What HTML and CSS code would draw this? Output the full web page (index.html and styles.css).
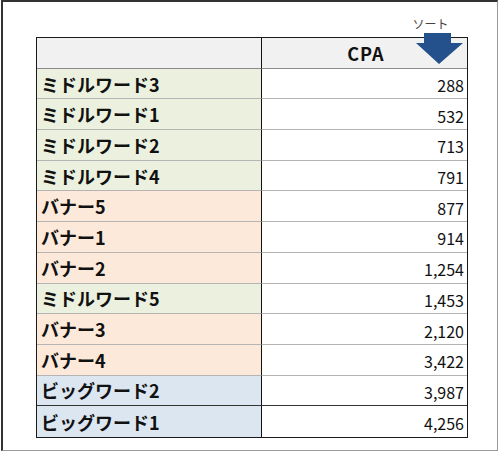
FILE: index.html
```html
<!DOCTYPE html>
<html lang="ja">
<head>
<meta charset="utf-8">
<link rel="stylesheet" href="styles.css">
</head>
<body>
<div class="frame">
  <div class="sheet">
    <div class="cell name head"></div>
    <div class="cell val head">CPA</div>
    <div class="cell name green">ミドルワード3</div><div class="cell val">288</div>
    <div class="cell name green">ミドルワード1</div><div class="cell val">532</div>
    <div class="cell name green">ミドルワード2</div><div class="cell val">713</div>
    <div class="cell name green">ミドルワード4</div><div class="cell val">791</div>
    <div class="cell name orange">バナー5</div><div class="cell val">877</div>
    <div class="cell name orange">バナー1</div><div class="cell val">914</div>
    <div class="cell name orange">バナー2</div><div class="cell val">1,254</div>
    <div class="cell name green">ミドルワード5</div><div class="cell val">1,453</div>
    <div class="cell name orange">バナー3</div><div class="cell val">2,120</div>
    <div class="cell name orange">バナー4</div><div class="cell val">3,422</div>
    <div class="cell name blue dark">ビッグワード2</div><div class="cell val dark">3,987</div>
    <div class="cell name blue last">ビッグワード1</div><div class="cell val last">4,256</div>
  </div>
  <div class="sort">
    <span class="sort-label">ソート</span>
    <svg class="sort-arrow" width="48" height="32" viewBox="0 0 48 32">
      <polygon points="8,0 35,0 35,10 47,10 23,31 0,10 8,10" fill="#24508c"/>
    </svg>
  </div>
</div>
</body>
</html>
```
FILE: styles.css
```css
html, body {
  margin: 0;
  padding: 0;
  background: #fff;
}
body {
  font-family: "Noto Sans CJK JP", "Noto Sans", sans-serif;
  color: #111;
}
.frame {
  position: relative;
  margin-left: 1px;
  width: 497px;
  height: 451px;
  box-sizing: border-box;
  border-top: 2px solid #333;
  border-left: 2px solid #333;
  border-right: 1px solid #9a9a9a;
  border-bottom: 1px solid #9a9a9a;
  padding: 35px 0 0 33px;
}
.sheet {
  width: 432px;
  height: 401px;
  box-sizing: border-box;
  border: 1.5px solid #1a1a1a;
  display: grid;
  grid-template-columns: 225px 1fr;
  grid-template-rows: repeat(13, 1fr);
}
.cell {
  display: flex;
  align-items: center;
  border-bottom: 1px solid #b4b4b4;
  box-sizing: border-box;
  min-height: 0;
}
.name {
  border-right: 1px solid #111;
  padding-left: 4px;
  font-weight: 700;
  font-size: 18px;
}
.val {
  justify-content: flex-end;
  padding-right: 3px;
  padding-top: 3px;
  font-size: 16px;
  background: #fff;
}
.head {
  background: #f1f1f1;
  border-bottom-color: #8a8a8a;
}
.val.head {
  justify-content: center;
  padding: 0 0 0 3px;
  font-weight: 700;
  font-size: 18px;
  letter-spacing: 1px;
}
.green { background: #ebf1de; }
.orange { background: #fde9d9; }
.blue { background: #dce6f1; }
.dark { border-bottom-color: #333; }
.last { border-bottom: none; }
.sort {
  position: absolute;
  left: 412px;
  top: 12px;
  width: 50px;
  display: flex;
  flex-direction: column;
  align-items: center;
}
.sort-label {
  font-size: 12px;
  color: #444;
  line-height: 15px;
  margin-left: -19px;
  margin-top: 2px;
}
.sort-arrow {
  display: block;
  margin-top: 2px;
}
```
